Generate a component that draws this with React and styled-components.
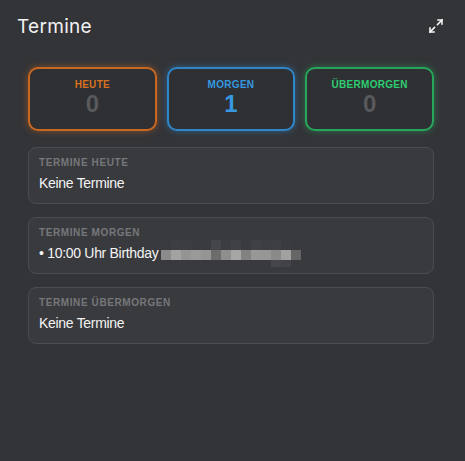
import React from "react";
import styled, { createGlobalStyle } from "styled-components";

const GlobalStyle = createGlobalStyle`
  html, body {
    margin: 0;
    padding: 0;
    background: #333438;
  }
  body {
    font-family: "Liberation Sans", Arial, sans-serif;
  }
`;

const Panel = styled.div`
  width: 465px;
  height: 461px;
  background: #333438;
  box-sizing: border-box;
  padding: 14px 20px 0 17px;
`;

const Header = styled.div`
  display: flex;
  align-items: center;
  justify-content: space-between;
  height: 24px;
`;

const Title = styled.h1`
  margin: 0;
  font-family: Inter, "Noto Sans", sans-serif;
  font-weight: 400;
  font-size: 19px;
  letter-spacing: 0.3px;
  color: #f2f2f2;
`;

const ExpandButton = styled.button`
  background: none;
  border: none;
  padding: 0;
  width: 18px;
  height: 18px;
  color: #f2f2f2;
  display: flex;
  align-items: center;
  justify-content: center;
`;

const Body = styled.div`
  padding: 29px 11px 0 11px;
  display: flex;
  flex-direction: column;
  gap: 13px;
`;

const StatRow = styled.div`
  display: grid;
  grid-template-columns: repeat(3, 1fr);
  gap: 10px;
  margin-bottom: 3px;
`;

const StatBox = styled.div`
  height: 64px;
  box-sizing: border-box;
  border: 2px solid ${(p) => p.$color};
  border-radius: 10px;
  background: #2f3033;
  box-shadow: 0 0 7px ${(p) => p.$glow};
  display: flex;
  flex-direction: column;
  align-items: center;
  padding-top: 10px;
`;

const StatLabel = styled.div`
  font-size: 10px;
  font-weight: 700;
  letter-spacing: 0.3px;
  color: ${(p) => p.$color};
`;

const StatValue = styled.div`
  font-size: 24px;
  font-weight: 700;
  line-height: 28px;
  color: ${(p) => (p.$active ? p.$color : "#58595c")};
`;

const Card = styled.div`
  height: 57px;
  box-sizing: border-box;
  background: #393a3e;
  border: 1px solid #4b4c51;
  border-radius: 8px;
  padding: 9px 10px 0 10px;
`;

const CardLabel = styled.div`
  font-size: 10px;
  font-weight: 700;
  letter-spacing: 0.6px;
  color: #76777a;
  text-transform: uppercase;
`;

const CardText = styled.div`
  margin-top: 6px;
  font-size: 14px;
  line-height: 18px;
  color: #f4f4f4;
  letter-spacing: -0.3px;
  white-space: nowrap;
`;

const Mosaic = styled.svg`
  display: inline-block;
  vertical-align: middle;
  margin: -10px 0 -10px 2px;
`;

const ExpandIcon = () => (
  <svg width="16" height="16" viewBox="0 0 16 16" fill="none" stroke="currentColor" strokeWidth="1.6" strokeLinecap="square">
    <path d="M9.5 6.5 L14 2" />
    <path d="M10 2 H14 V6" />
    <path d="M6.5 9.5 L2 14" />
    <path d="M2 10 V14 H6" />
  </svg>
);

const midRow = ["#8b8b8b", "#a3a3a3", "#949494", "#9a9a9a", "#959595", "#6c6c6c", "#8e8e8e", "#a6a6a6", "#828282", "#979797", "#969696", "#8a8a8a", "#a1a1a1", "#666666"];
const topRow = ["#3a3b3f", "#3d3e42", "#3c3d41", "#3a3b3f", "#3b3c40", "#45464a", "#3c3d41", "#404145", "#3a3b3f", "#404145", "#3c3d41", "#3e3f43", "#3a3b3f", "#393a3e"];

const Blurred = () => (
  <Mosaic width="140" height="28" viewBox="0 0 140 28">
    {topRow.map((c, i) => (
      <rect key={"t" + i} x={i * 10} y="0" width="10" height="10" fill={c} />
    ))}
    {midRow.map((c, i) => (
      <rect key={"m" + i} x={i * 10} y="10" width="10" height="10" fill={c} />
    ))}
    <rect x="110" y="20" width="10" height="7" fill="#45464a" />
    <rect x="120" y="20" width="10" height="7" fill="#424347" />
  </Mosaic>
);

const stats = [
  { label: "HEUTE", value: 0, color: "#c8671f", glow: "rgba(200,103,31,0.55)" },
  { label: "MORGEN", value: 1, color: "#2f86c8", glow: "rgba(47,134,200,0.55)" },
  { label: "ÜBERMORGEN", value: 0, color: "#27a55a", glow: "rgba(39,165,90,0.55)" },
];

const accent = { HEUTE: "#d8701f", MORGEN: "#3598e0", ÜBERMORGEN: "#2ecc71" };

export default function App() {
  return (
    <>
      <GlobalStyle />
      <Panel>
        <Header>
          <Title>Termine</Title>
          <ExpandButton>
            <ExpandIcon />
          </ExpandButton>
        </Header>
        <Body>
          <StatRow>
            {stats.map((s) => (
              <StatBox key={s.label} $color={s.color} $glow={s.glow}>
                <StatLabel $color={accent[s.label]}>{s.label}</StatLabel>
                <StatValue $active={s.value > 0} $color={accent[s.label]}>
                  {s.value}
                </StatValue>
              </StatBox>
            ))}
          </StatRow>
          <Card>
            <CardLabel>Termine heute</CardLabel>
            <CardText>Keine Termine</CardText>
          </Card>
          <Card>
            <CardLabel>Termine morgen</CardLabel>
            <CardText>
              • 10:00 Uhr Birthday
              <Blurred />
            </CardText>
          </Card>
          <Card>
            <CardLabel>Termine übermorgen</CardLabel>
            <CardText>Keine Termine</CardText>
          </Card>
        </Body>
      </Panel>
    </>
  );
}
